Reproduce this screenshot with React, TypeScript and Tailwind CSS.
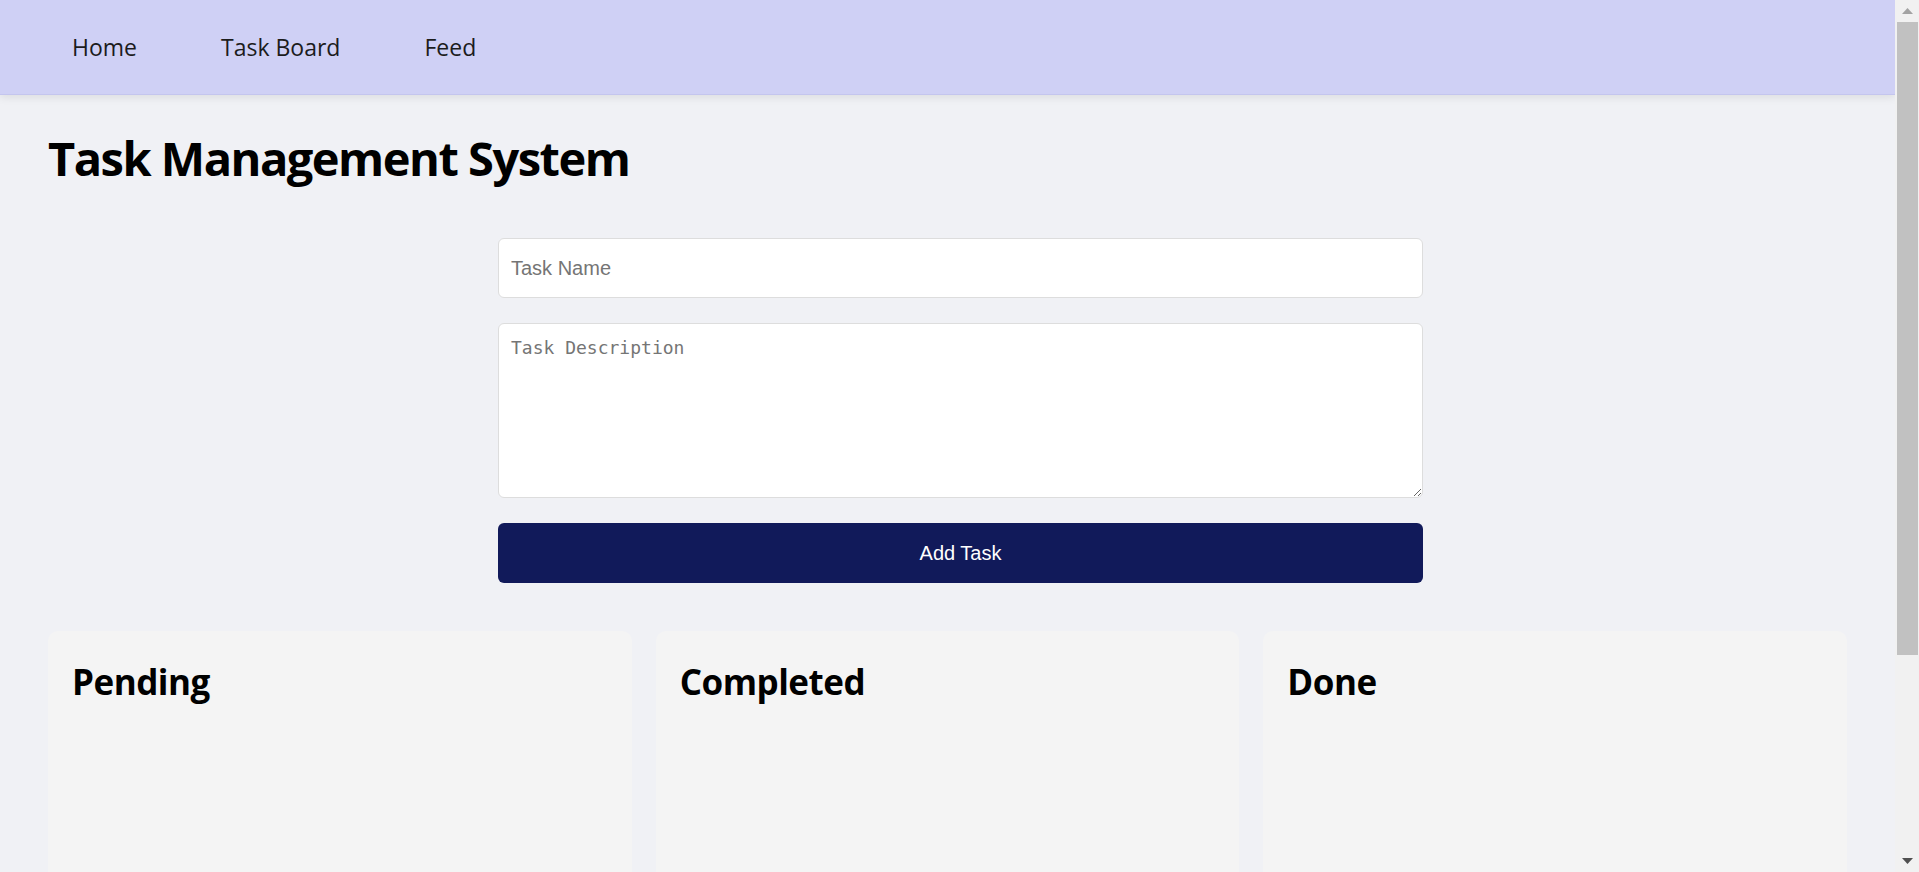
import React from "react";

function Scrollbar() {
  return (
    <div className="w-[24px] shrink-0 h-full bg-[#f1f1f1] flex flex-col">
      <div className="h-[22px] flex items-center justify-center">
        <svg width="11" height="6" viewBox="0 0 11 6">
          <polygon points="5.5,0 11,6 0,6" fill="#a3a3a3" />
        </svg>
      </div>
      <div className="h-[633px] ml-[2px] mr-[1px] bg-[#c1c1c1]" />
      <div className="flex-1" />
      <div className="h-[22px] flex items-center justify-center">
        <svg width="11" height="6" viewBox="0 0 11 6">
          <polygon points="0,0 11,0 5.5,6" fill="#505050" />
        </svg>
      </div>
    </div>
  );
}

export default function App() {
  return (
    <div className="h-screen flex overflow-hidden bg-[#f0f1f5] font-['Open_Sans',sans-serif]">
      <div className="flex-1 min-w-0 h-full overflow-hidden">
        <nav className="h-[95px] bg-[#cfd0f5] border-b border-[#c4c5ee] shadow-[0_3px_8px_rgba(0,0,0,0.08)] flex items-center pl-[72px] gap-[84px] text-[23px] text-[#1c1c1c]">
          <a className="cursor-pointer">Home</a>
          <a className="cursor-pointer">Task Board</a>
          <a className="cursor-pointer">Feed</a>
        </nav>

        <main className="px-[48px] pt-[40px] pb-[48px]">
          <h1 className="text-[47px] leading-none font-bold tracking-[-1.5px] text-black">
            Task Management System
          </h1>

          <div className="w-[899px] mx-auto mt-[56px] flex flex-col">
            <input
              placeholder="Task Name"
              className="w-[925px] h-[60px] bg-white border border-[#dddddd] rounded-[6px] px-[12px] text-[20px] font-['Liberation_Sans',Arial,sans-serif] placeholder:text-[#757575] outline-none"
            />
            <textarea
              placeholder="Task Description"
              className="w-[925px] h-[175px] mt-[25px] bg-white border border-[#dddddd] rounded-[6px] px-[12px] py-[10px] text-[18px] font-['DejaVu_Sans_Mono',monospace] placeholder:text-[#757575] outline-none"
            />
            <button className="w-[925px] h-[60px] mt-[25px] bg-[#111a5a] text-white rounded-[6px] text-[20px] font-['Liberation_Sans',Arial,sans-serif]">
              Add Task
            </button>
          </div>

          <div className="grid grid-cols-3 gap-[24px] mt-[48px]">
            {["Pending", "Completed", "Done"].map((t) => (
              <section
                key={t}
                className="bg-[#f4f4f4] rounded-[10px] min-h-[461px] px-[24px] pt-[33px]"
              >
                <h2 className="text-[35px] leading-none font-bold tracking-[-0.5px] text-black">
                  {t}
                </h2>
              </section>
            ))}
          </div>
        </main>
      </div>
      <Scrollbar />
    </div>
  );
}
